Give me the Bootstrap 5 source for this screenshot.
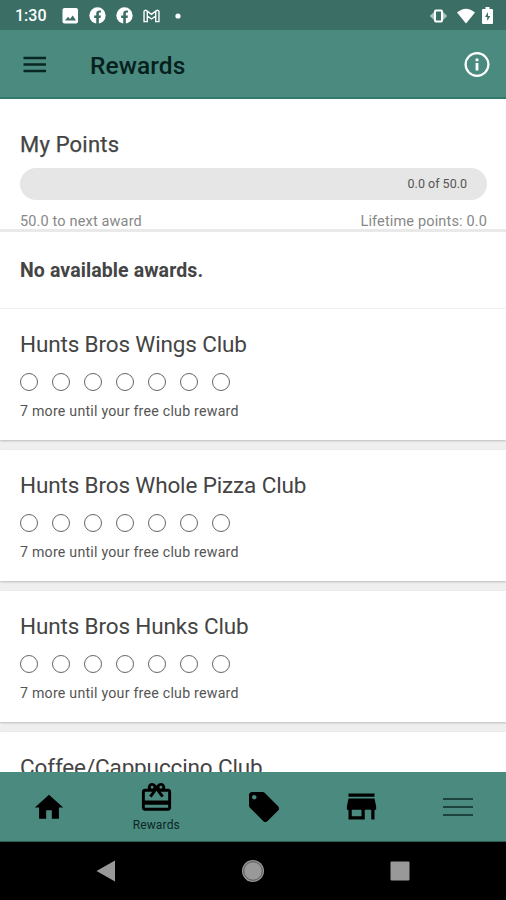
<!DOCTYPE html>
<html lang="en">
<head>
<meta charset="utf-8">
<meta name="viewport" content="width=device-width, initial-scale=1">
<title>Rewards</title>
<link href="https://cdn.jsdelivr.net/npm/bootstrap@5.3.0/dist/css/bootstrap.min.css" rel="stylesheet">
<style>
body{font-family:Roboto,"Liberation Sans",sans-serif;height:900px;background:#efefef;color:#444;line-height:1}
svg{display:block;flex:none}
main{min-height:0}
.status-bar{height:30px;background:#3b6f66;color:#fff;padding:1px 13px 0 15px}
.clock{font-size:16px;font-weight:500;width:47px}
.icon-gap{margin-left:10px}
.gap-wide{margin-left:15px}
.gap-wifi{margin-left:9px}
.gap-battery{margin-left:7px}
.app-bar{height:69px;background:#4a8a7f;border-bottom:2px solid #30796c;padding:2px 16px 0 23px}
.app-title{font-size:24.5px;font-weight:500;letter-spacing:.1px;color:#06201d;margin-left:43px;padding-top:2px}
.points{height:133px;background:#fff;padding:34px 19px 0 20px;border-bottom:3px solid #e9e9e9}
.points h2{font-size:22px;line-height:24px;letter-spacing:.2px;font-weight:400;-webkit-text-stroke:.25px #444}
.meter{height:32px;border-radius:16px;background:#e6e6e6;margin-top:11px;padding-right:20px;font-size:12.5px;color:#555}
.caption-row{font-size:14.5px;letter-spacing:.15px;color:#888;margin-top:15px}
.awards{height:77px;background:#fff;padding:2px 20px 0;border-bottom:1px solid #f5f5f5;font-size:19.5px;letter-spacing:.1px;font-weight:700}
.club{height:131px;background:#fff;padding:22px 20px 0;margin-bottom:10px;box-shadow:0 1px 2px #bbb}
.club h3{font-size:22.5px;line-height:26px;letter-spacing:-.14px;font-weight:400;margin:0;white-space:nowrap}
.stamps{gap:14px;margin-top:16px}
.stamp{width:18px;height:18px;border:1.5px solid #666;border-radius:50%}
.club p{font-size:14.2px;letter-spacing:.23px;line-height:18px;margin:11px 0 0;color:#555}
.tab-bar{height:70px;background:#4a8a7f;border-bottom:1px solid #2c5b53}
.tab-bar a{width:20%;color:#000}
.tab-home{padding:2px 4px 0 0}
.tab-rewards{padding:8px 0 0 9px}
.tab-offers{padding-left:22px}
.tab-store{padding-left:14px}
.tab-more{padding-left:5px}
.tab-label{font-size:12px;letter-spacing:.15px;color:#0b2723;margin-top:4px}
.system-bar{height:58px;background:#000;padding:0 96px}
</style>
</head>
<body class="d-flex flex-column overflow-hidden m-0">
<header class="flex-shrink-0">
  <div class="status-bar d-flex align-items-center">
    <span class="clock">1:30</span>
    <svg width="17" height="16" viewBox="0 0 17 16"><rect x=".5" width="15.500" height="15.500" rx="2" fill="#fff"/><path d="M3 12.500 6 8.800l2 2.300 2.700-3.600 3.300 5z" fill="#3b6f66"/></svg>
    <svg class="icon-gap" width="17" height="17" viewBox="0 0 24 24"><circle cx="12" cy="12" r="11.500" fill="#fff"/><path d="M10.200 24v-8.500H7.300V12h2.900V9.400c0-3 1.800-4.500 4.400-4.500l2.300.2v2.800h-1.300c-1.300 0-1.700.8-1.700 1.600V12h2.900l-.5 3.500h-2.400V24z" fill="#3b6f66"/></svg>
    <svg class="icon-gap" width="17" height="17" viewBox="0 0 24 24"><circle cx="12" cy="12" r="11.500" fill="#fff"/><path d="M10.200 24v-8.500H7.300V12h2.900V9.400c0-3 1.800-4.500 4.400-4.500l2.300.2v2.800h-1.300c-1.300 0-1.700.8-1.700 1.600V12h2.900l-.5 3.500h-2.400V24z" fill="#3b6f66"/></svg>
    <svg class="icon-gap" width="17" height="14" viewBox="0 0 18 15" fill="none" stroke="#fff" stroke-width="1.500"><path d="M1 13.500V2.500Q2 .7 3.700 1.800L9 5.700l5.300-3.900Q16 .7 17 2.500v11h-3.500V7.500L9 10.700 4.500 7.500v6zM4.500 7.500v-5M13.500 7.500v-5"/></svg>
    <svg class="gap-wide" width="6" height="6" viewBox="0 0 6 6"><circle cx="3" cy="3" r="2.600" fill="#fff"/></svg>
    <svg class="ms-auto" width="19" height="14" viewBox="0 0 19 14"><path d="M6 2 .8 7 6 12zM13 2l5.200 5-5.200 5z" fill="#a9c4bf"/><rect x="6" y="1.500" width="7" height="11" rx="1" fill="none" stroke="#fff" stroke-width="2"/></svg>
    <svg class="gap-wifi" width="18" height="16" viewBox="0 0 19 16"><path d="M0 4.300Q9.500-3.700 19 4.300L9.500 16z" fill="#fff"/></svg>
    <svg class="gap-battery" width="11" height="17" viewBox="0 0 11 17"><path d="M3.500 0h4v2H10q1 0 1 1v13q0 1-1 1H1q-1 0-1-1V3q0-1 1-1h2.500z" fill="#fff"/><path d="M6 5 3 10h2.200v4L8.300 9H6z" fill="#3b6f66"/></svg>
  </div>
  <nav class="app-bar d-flex align-items-center">
    <svg width="24" height="18" viewBox="0 0 24 18" stroke="#082722" stroke-width="2.400"><path d="M.5 2h22.500M.5 8.500h22.500M.5 15h22.500"/></svg>
    <h1 class="app-title mb-0">Rewards</h1>
    <svg class="ms-auto" width="26" height="26" viewBox="0 0 26 26"><circle cx="13" cy="12.500" r="11.400" fill="none" stroke="#fff" stroke-width="2.200"/><path d="M13 6.500v2.700M13 11v7.500" stroke="#fff" stroke-width="2.800"/></svg>
  </nav>
</header>
<main class="flex-grow-1 overflow-hidden">
  <section class="points">
    <h2 class="m-0">My Points</h2>
    <div class="meter d-flex align-items-center justify-content-end">0.0 of 50.0</div>
    <div class="caption-row d-flex justify-content-between"><span>50.0 to next award</span><span>Lifetime points: 0.0</span></div>
  </section>
  <section class="awards d-flex align-items-center">No available awards.</section>
  <article class="club"><h3>Hunts Bros Wings Club</h3>
    <div class="stamps d-flex"><i class="stamp"></i><i class="stamp"></i><i class="stamp"></i><i class="stamp"></i><i class="stamp"></i><i class="stamp"></i><i class="stamp"></i></div>
    <p>7 more until your free club reward</p></article>
  <article class="club"><h3>Hunts Bros Whole Pizza Club</h3>
    <div class="stamps d-flex"><i class="stamp"></i><i class="stamp"></i><i class="stamp"></i><i class="stamp"></i><i class="stamp"></i><i class="stamp"></i><i class="stamp"></i></div>
    <p>7 more until your free club reward</p></article>
  <article class="club"><h3>Hunts Bros Hunks Club</h3>
    <div class="stamps d-flex"><i class="stamp"></i><i class="stamp"></i><i class="stamp"></i><i class="stamp"></i><i class="stamp"></i><i class="stamp"></i><i class="stamp"></i></div>
    <p>7 more until your free club reward</p></article>
  <article class="club"><h3>Coffee/Cappuccino Club</h3></article>
</main>
<footer class="flex-shrink-0">
  <nav class="tab-bar d-flex">
    <a class="tab-home d-flex align-items-center justify-content-center"><svg width="34" height="35" viewBox="0 0 24 24"><path d="M10 20v-6h4v6h5v-8h3L12 3 2 12h3v8z"/></svg></a>
    <a class="tab-rewards d-flex flex-column align-items-center text-decoration-none"><svg width="35" height="35" viewBox="0 0 24 24"><path d="M20 6h-2.180c.11-.31.18-.65.18-1 0-1.660-1.340-3-3-3-1.050 0-1.960.54-2.500 1.350l-.5.67-.5-.68C10.960 2.540 10.050 2 9 2 7.340 2 6 3.340 6 5c0 .35.07.69.18 1H4c-1.110 0-1.990.89-1.990 2L2 19c0 1.110.89 2 2 2h16c1.110 0 2-.89 2-2V8c0-1.110-.89-2-2-2zm-5-2c.55 0 1 .45 1 1s-.45 1-1 1-1-.45-1-1 .45-1 1-1zM9 4c.55 0 1 .45 1 1s-.45 1-1 1-1-.45-1-1 .45-1 1-1zm11 15H4v-2h16v2zm0-5H4V8h5.080L7 10.830 8.620 12 11 8.760l1-1.360 1 1.360L15.380 12 17 10.830 14.920 8H20v6z"/></svg><span class="tab-label">Rewards</span></a>
    <a class="tab-offers d-flex align-items-center justify-content-center"><svg width="36" height="36" viewBox="0 0 24 24"><path d="M21.410 11.580l-9-9C12.050 2.220 11.550 2 11 2H4c-1.100 0-2 .9-2 2v7c0 .55.22 1.050.59 1.420l9 9c.36.36.86.58 1.410.58s1.050-.22 1.410-.59l7-7c.37-.36.59-.86.59-1.410s-.23-1.060-.59-1.420zM5.500 7C4.670 7 4 6.330 4 5.500S4.670 4 5.500 4 7 4.670 7 5.500 6.330 7 5.500 7z"/></svg></a>
    <a class="tab-store d-flex align-items-center justify-content-center"><svg width="39" height="39" viewBox="0 0 24 24"><path d="M20 4H4v2h16V4zm1 10v-2l-1-5H4l-1 5v2h1v6h10v-6h4v6h2v-6h1zm-9 4H6v-4h6v4z"/></svg></a>
    <a class="tab-more d-flex align-items-center justify-content-center"><svg width="30" height="20" viewBox="0 0 30 20" stroke="#0f2d29" stroke-width="1.700"><path d="M0 2h30M0 10h30M0 18h30"/></svg></a>
  </nav>
  <div class="system-bar d-flex align-items-center justify-content-between">
    <svg width="20" height="22" viewBox="0 0 20 22"><path d="M19 .5v21L.5 11z" fill="#999"/></svg>
    <svg width="24" height="24" viewBox="0 0 24 24"><circle cx="12" cy="12" r="11" fill="#999"/><circle cx="12" cy="12" r="9.300" fill="none" stroke="#555"/></svg>
    <svg width="20" height="20" viewBox="0 0 20 20"><rect x=".5" y=".5" width="19" height="19" rx="1" fill="#999"/></svg>
  </div>
</footer>
</body>
</html>
